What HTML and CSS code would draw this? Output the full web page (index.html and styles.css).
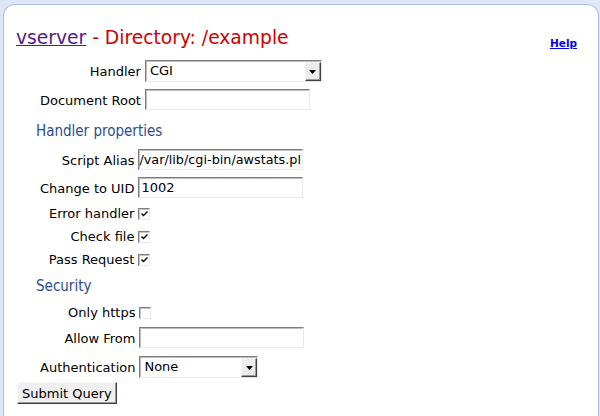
FILE: index.html
```html
<!DOCTYPE html>
<html>
<head>
<meta charset="utf-8">
<link rel="stylesheet" href="styles.css">
</head>
<body>
<div class="panel">
  <div class="header">
    <h1><a href="#">vserver</a> - Directory: /example</h1>
    <a class="help" href="#">Help</a>
  </div>
  <form class="form">
    <div class="grid">
      <span class="lbl">Handler</span>
      <div class="select wide"><span class="val">CGI</span><span class="arrow"><svg width="7" height="4" viewBox="0 0 7 4"><path d="M0 0H7L3.5 4Z" fill="#000"/></svg></span></div>
      <span class="lbl">Document Root</span>
      <input class="txt" type="text" value="">
    </div>
    <h2 class="first">Handler properties</h2>
    <div class="grid">
      <span class="lbl">Script Alias</span>
      <input class="txt shifted" type="text" value="/var/lib/cgi-bin/awstats.pl">
      <span class="lbl">Change to UID</span>
      <input class="txt" type="text" value="1002">
      <span class="lbl">Error handler</span>
      <span class="cb"><svg width="9" height="9" viewBox="0 0 9 9"><path d="M1.5 4.5L3.5 6.5L7.5 2.5" fill="none" stroke="#000" stroke-width="1.4"/></svg></span>
      <span class="lbl">Check file</span>
      <span class="cb"><svg width="9" height="9" viewBox="0 0 9 9"><path d="M1.5 4.5L3.5 6.5L7.5 2.5" fill="none" stroke="#000" stroke-width="1.4"/></svg></span>
      <span class="lbl">Pass Request</span>
      <span class="cb"><svg width="9" height="9" viewBox="0 0 9 9"><path d="M1.5 4.5L3.5 6.5L7.5 2.5" fill="none" stroke="#000" stroke-width="1.4"/></svg></span>
    </div>
    <h2>Security</h2>
    <div class="grid">
      <span class="lbl">Only https</span>
      <span class="cb"></span>
      <span class="lbl">Allow From</span>
      <input class="txt" type="text" value="">
      <span class="lbl">Authentication</span>
      <div class="select narrow"><span class="val">None</span><span class="arrow"><svg width="7" height="4" viewBox="0 0 7 4"><path d="M0 0H7L3.5 4Z" fill="#000"/></svg></span></div>
    </div>
    <button class="submit" type="button">Submit Query</button>
  </form>
</div>
</body>
</html>
```

FILE: styles.css
```css
body {
  margin: 0;
  background: #dde7f5;
  font-family: "DejaVu Sans", sans-serif;
  font-size: 13px;
  color: #000;
}

.panel {
  margin: 4px 1px 0 3px;
  background: #fff;
  border: 1px solid #a9bfe3;
  border-bottom: none;
  border-radius: 12px 12px 0 0;
  padding: 22px 21px 0 12px;
  height: 412px;
  box-sizing: border-box;
}

.header {
  display: flex;
  justify-content: space-between;
  align-items: flex-start;
}

h1 {
  margin: 0;
  font-size: 18.7px;
  font-weight: normal;
  line-height: 21px;
  color: #cc0000;
}

h1 a {
  color: #551a8b;
}

.help {
  margin-top: 10px;
  font-size: 10.5px;
  line-height: 12px;
  font-weight: bold;
  color: #0000ee;
}

.form {
  margin-top: 7px;
}

.grid {
  display: grid;
  grid-template-columns: max-content max-content;
  column-gap: 4px;
  align-items: center;
  margin-left: 24px;
}

.lbl {
  text-align: right;
  line-height: 15px;
  padding: 4px 0;
}

h2 {
  margin: 6px 0 6px 20px;
  font-size: 15px;
  font-stretch: condensed;
  font-weight: normal;
  line-height: 18px;
  color: #2b4d8e;
}

h2.first {
  margin-top: 8px;
}

.txt {
  width: 165px;
  height: 21px;
  margin: 3px 0 4px;
  box-sizing: border-box;
  border: 1px solid;
  border-color: #7e7e7e #e8e8e8 #e8e8e8 #7e7e7e;
  box-shadow: inset 1px 1px 0 #bdbdbd;
  padding: 0 2px;
  font-family: "DejaVu Sans", sans-serif;
  font-size: 13px;
  color: #000;
  background: #fff;
  outline: none;
}

.shifted {
  padding: 0;
  font-size: 12.8px;
}

.select {
  display: flex;
  align-items: stretch;
  height: 22px;
  margin: 4px 0;
  box-sizing: border-box;
  border: 1px solid;
  border-color: #7e7e7e #e8e8e8 #e8e8e8 #7e7e7e;
  box-shadow: inset 1px 1px 0 #bdbdbd;
  background: #fff;
}

.wide {
  width: 177px;
}

.narrow {
  width: 119px;
}

.val {
  flex: 1;
  padding-left: 4px;
  line-height: 20px;
}

.arrow {
  width: 16px;
  box-sizing: border-box;
  margin: 1px 0 0 0;
  border: 1px solid;
  border-color: #f4f4f4 #404040 #404040 #f4f4f4;
  box-shadow: inset -1px -1px 0 #9a9a9a;
  background: #ececec;
  display: flex;
  align-items: center;
  justify-content: center;
}

.cb {
  width: 12px;
  height: 12px;
  box-sizing: border-box;
  border: 1px solid;
  border-color: #7e7e7e #e8e8e8 #e8e8e8 #7e7e7e;
  box-shadow: inset 1px 1px 0 #c4c4c4;
  background: #fff;
  display: flex;
  align-items: center;
  justify-content: center;
}

.submit {
  display: block;
  margin: 0 0 0 1px;
  height: 22px;
  padding: 0 4px;
  font-family: "DejaVu Sans", sans-serif;
  font-size: 13px;
  color: #000;
  background: #efefef;
  border: 1px solid;
  border-color: #fafafa #404040 #404040 #fafafa;
  box-shadow: inset -1px -1px 0 #9a9a9a;
}
```
